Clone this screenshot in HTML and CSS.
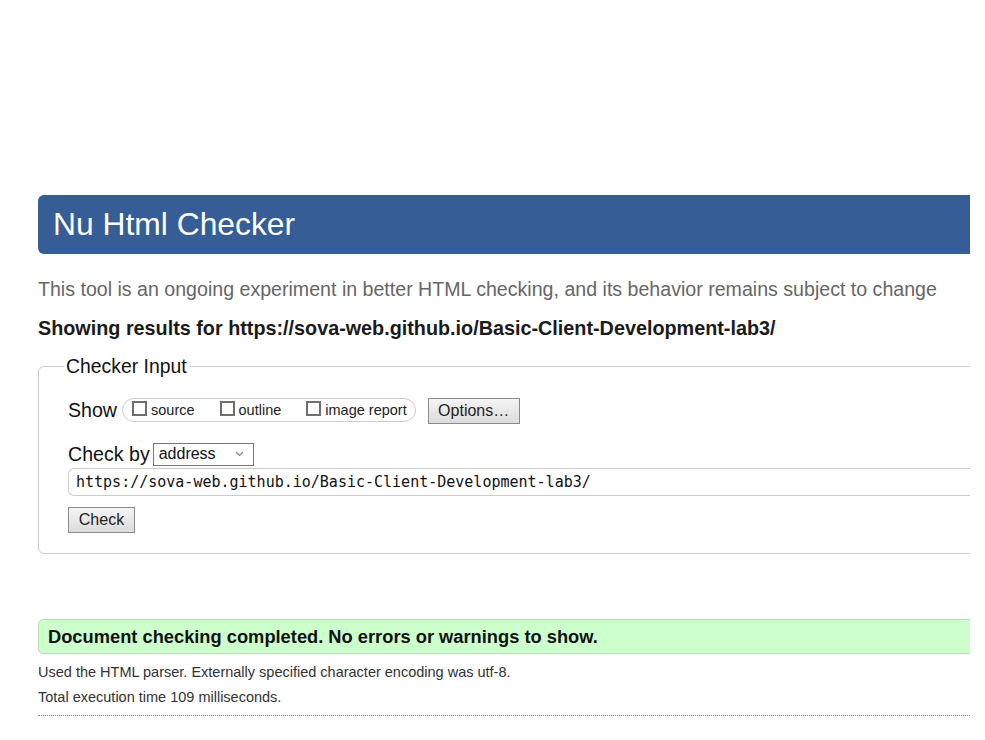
FILE: index.html
```html
<!DOCTYPE html>
<html lang="en">
<head>
<meta charset="utf-8">
<title>Nu Html Checker</title>
<link rel="stylesheet" href="styles.css">
</head>
<body>
<div class="page">
  <h1 class="banner">Nu Html Checker</h1>
  <p class="tagline">This tool is an ongoing experiment in better HTML checking, and its behavior remains subject to change</p>
  <p class="results-for">Showing results for https://sova-web.github.io/Basic-Client-Development-lab3/</p>
  <fieldset class="input-box">
    <legend class="legend">Checker Input</legend>
    <div class="row show-row">
      <span class="row-label">Show</span>
      <span class="pill">
        <label class="opt"><span class="cb"></span>source</label>
        <label class="opt"><span class="cb"></span>outline</label>
        <label class="opt"><span class="cb"></span>image report</label>
      </span>
      <span class="btn btn-options">Options…</span>
    </div>
    <div class="row by-row">
      <span class="row-label">Check by</span>
      <span class="select">address<svg class="chev" width="9" height="6" viewBox="0 0 9 6"><path d="M1 1 L4.5 4.5 L8 1" fill="none" stroke="#8a8a8a" stroke-width="1.2"/></svg></span>
    </div>
    <div class="url">https://sova-web.github.io/Basic-Client-Development-lab3/</div>
    <div class="row"><span class="btn btn-check">Check</span></div>
  </fieldset>
  <div class="success">Document checking completed. No errors or warnings to show.</div>
  <p class="details">Used the HTML parser. Externally specified character encoding was utf-8.</p>
  <p class="details">Total execution time 109 milliseconds.</p>
  <div class="dotted"></div>
</div>
</body>
</html>
```
FILE: styles.css
```css
html, body {
  margin: 0;
  padding: 0;
  background: #fff;
}
body {
  font-family: "Liberation Sans", Arial, sans-serif;
  color: #111;
}
.page {
  margin-left: 38px;
  width: 932px;
  padding-top: 195px;
  overflow: hidden;
}
.page > * {
  width: calc(100% + 20px);
  box-sizing: border-box;
}
.banner {
  margin: 0;
  height: 59px;
  line-height: 59px;
  background: #365d95;
  color: #fff;
  font-size: 31.8px;
  font-weight: normal;
  padding-left: 15px;
  border-radius: 6px;
}
.tagline {
  margin: 23px 0 0;
  font-size: 19.6px;
  line-height: 24px;
  color: #666;
  white-space: nowrap;
}
.results-for {
  margin: 16px 0 0;
  font-size: 19.8px;
  line-height: 22px;
  font-weight: bold;
  color: #1a1a1a;
  white-space: nowrap;
}
.input-box {
  margin: 16px 0 0;
  border: 1px solid #ccc;
  border-radius: 6px;
  padding: 20px 0 20px 29px;
  min-width: 0;
}
.legend {
  margin-left: -4px;
  padding: 0 2px;
  font-size: 19.4px;
  line-height: 22px;
  color: #111;
}
.row {
  display: flex;
  align-items: center;
}
.row-label {
  font-size: 19.6px;
  line-height: 22px;
  color: #111;
}
.show-row {
  height: 26px;
}
.pill {
  display: flex;
  align-items: center;
  height: 24px;
  box-sizing: border-box;
  margin-left: 5px;
  padding: 0 8px 0 9px;
  border: 1px solid #ccc;
  border-radius: 12px;
  gap: 25px;
}
.opt {
  display: flex;
  align-items: center;
  font-size: 14.5px;
  color: #222;
}
.cb {
  flex: none;
  width: 15px;
  height: 15px;
  box-sizing: border-box;
  border: 2px solid #6e6e6e;
  margin-right: 4px;
  margin-top: -3px;
}
.btn {
  display: flex;
  align-items: center;
  justify-content: center;
  box-sizing: border-box;
  height: 26px;
  border: 1px solid #8a8a8a;
  background: linear-gradient(#f4f4f4, #dcdcdc);
  font-size: 16px;
  color: #222;
}
.btn-options {
  margin-left: 12px;
  width: 92px;
  margin-top: 2px;
}
.by-row {
  margin-top: 19px;
  height: 24px;
}
.select {
  display: flex;
  align-items: center;
  justify-content: space-between;
  box-sizing: border-box;
  margin-left: 3px;
  width: 101px;
  height: 23px;
  border: 1px solid #777;
  padding: 0 9px 0 5px;
  font-size: 16px;
  color: #111;
}
.url {
  margin-top: 2px;
  height: 28px;
  box-sizing: border-box;
  border: 1px solid #ccc;
  border-right: none;
  border-radius: 6px 0 0 6px;
  padding-left: 7px;
  font-family: "DejaVu Sans Mono", monospace;
  font-size: 15px;
  line-height: 27px;
  color: #111;
  white-space: nowrap;
}
.btn-check {
  margin-top: 11px;
  width: 67px;
}
.success {
  margin-top: 65px;
  height: 35px;
  line-height: 34px;
  background: #ccffcc;
  border: 1px solid #b5dfb5;
  border-radius: 5px;
  padding-left: 9px;
  font-size: 18.3px;
  font-weight: bold;
  color: #111;
  white-space: nowrap;
}
.details {
  margin: 0;
  font-size: 14.5px;
  line-height: 25px;
  color: #333;
}
.success + .details {
  margin-top: 6px;
}
.dotted {
  margin-top: 5px;
  border-top: 1px dotted #888;
}
```
